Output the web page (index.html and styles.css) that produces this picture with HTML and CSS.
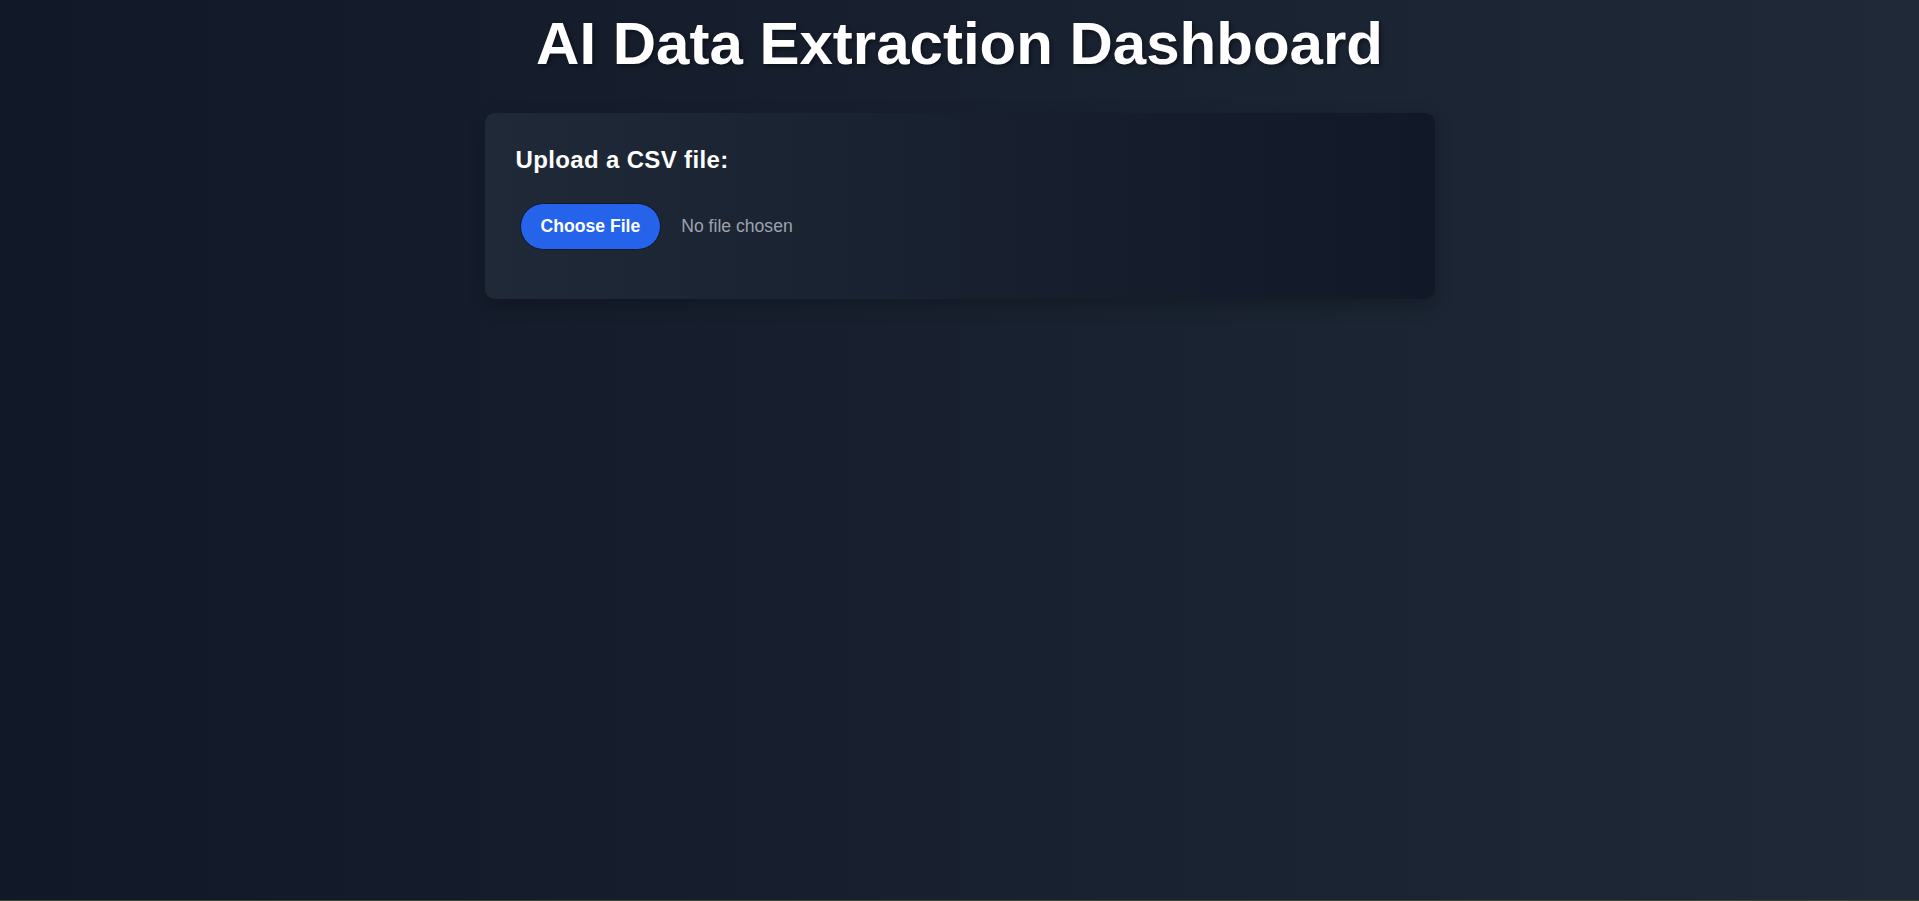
FILE: index.html
```
<!DOCTYPE html>
<html lang="en">
<head>
<meta charset="utf-8">
<title>AI Data Extraction Dashboard</title>
<link rel="stylesheet" href="styles.css">
</head>
<body>
<div class="app">
  <h1 class="title">AI Data Extraction Dashboard</h1>
  <div class="card">
    <label class="upload-label" for="csv-file">Upload a CSV file:</label>
    <input type="file" id="csv-file" class="file-input" accept=".csv">
  </div>
</div>
</body>
</html>
```
FILE: styles.css
```
html {
  height: 100%;
}

body {
  margin: 0;
  min-height: 100%;
  font-family: "Liberation Sans", Arial, sans-serif;
  color: #ffffff;
  background:
    linear-gradient(to top, #3b4333 0, #3b4333 1px, transparent 1px),
    linear-gradient(90deg, #111827 0%, #1f2937 100%);
}

.app {
  display: flex;
  flex-direction: column;
  align-items: center;
  padding-top: 9px;
}

.title {
  margin: 0;
  font-size: 60px;
  font-weight: 700;
  line-height: normal;
  color: #ffffff;
  text-shadow: 2px 2px 4px rgba(0, 0, 0, 0.45);
}

.card {
  box-sizing: border-box;
  width: 950px;
  margin-top: 35px;
  padding: 33px 30px 49px;
  border-radius: 10px;
  background: linear-gradient(90deg, #1f2937 0%, #111827 100%);
  box-shadow: 0 6px 18px rgba(0, 0, 0, 0.22);
}

.upload-label {
  display: block;
  padding-left: 1px;
  font-size: 24px;
  font-weight: 700;
  letter-spacing: 0.35px;
  line-height: normal;
  color: #ffffff;
}

.file-input {
  display: block;
  margin: 29px 0 0 5px;
  font-family: "Liberation Sans", Arial, sans-serif;
  font-size: 17.6px;
  color: #9ca3af;
}

.file-input::file-selector-button {
  margin: 0 20px 0 0;
  padding: 12px 20px;
  border: 1px solid #111827;
  border-radius: 999px;
  background: #2563eb;
  color: #ffffff;
  font-family: "Liberation Sans", Arial, sans-serif;
  font-size: 17.6px;
  font-weight: 700;
  line-height: normal;
  cursor: pointer;
}
```
